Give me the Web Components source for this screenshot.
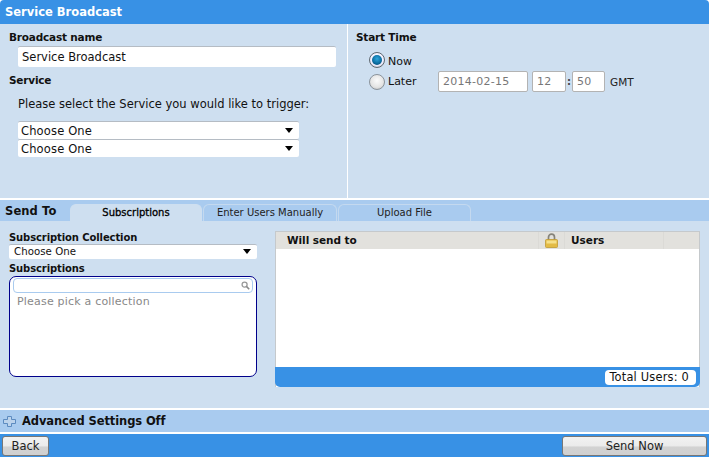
<!DOCTYPE html>
<html>
<head>
<meta charset="utf-8">
<title>Service Broadcast</title>
<style>
  html, body { margin: 0; padding: 0; background: #fff; }
  body { width: 709px; height: 457px; overflow: hidden; font: 11px "DejaVu Sans", Verdana, sans-serif; color: #111; }
</style>
</head>
<body>
<broadcast-app></broadcast-app>
<script>
// small helper so every element below stays short
function define(name, css, html) {
  const template = document.createElement('template');
  template.innerHTML = `<style>${css}</style>${html}`;
  customElements.define(name, class extends HTMLElement {
    constructor() {
      super();
      this.attachShadow({ mode: 'open' });
      this.shadowRoot.appendChild(template.content.cloneNode(true));
    }
  });
}

// white select with black arrow
define('sb-select', `
  :host { display: block; box-sizing: border-box; background: #fff; border-top: 1px solid #b5bcc4; border-radius: 2px; position: relative; padding-left: 3px; height: 18px; line-height: 19px; font-size: 11.5px; letter-spacing: .15px; width: 281px; }
  :host([small]) { width: 248px; height: 15px; line-height: 14px; font-size: 10.2px; letter-spacing: .05px; padding-left: 5px; }
  i { position: absolute; right: 6px; top: 6px; width: 0; height: 0; border: 4.5px solid transparent; border-top: 5px solid #000; border-bottom: 0; }
  :host([small]) i { right: 6px; top: 4px; }
`, `<slot></slot><i></i>`);

// glossy radio, grey ring and a blue dot when it is on
define('sb-radio', `
  :host { display: block; width: 16px; height: 16px; box-sizing: border-box; border-radius: 50%; border: 1px solid #8b939b; background: radial-gradient(circle at 50% 40%, #fbfbfb, #e4e4e4 60%, #b4b4b4); position: relative; }
  :host([on]) { background: radial-gradient(circle at 50% 40%, #fff, #eef 60%, #a8a8a8); border-color: #5f6870; }
  :host([on]) i { position: absolute; left: 2px; top: 2px; width: 10px; height: 10px; border-radius: 50%; background: radial-gradient(circle at 50% 38%, #2fa6dc, #0c6fa3 55%, #053f66); }
`, `<i></i>`);

// grey time input
define('sb-time', `
  :host { display: block; box-sizing: border-box; height: 21px; line-height: 19px; background: #fff; border: 1px solid #b3b3b3; border-radius: 2px; padding-left: 4px; color: #777; font-size: 11px; letter-spacing: .25px; }
`, `<slot></slot>`);

define('sb-button', `
  :host { display: block; box-sizing: border-box; height: 20px; line-height: 19px; text-align: center; font-size: 11.5px; border: 1px solid #777; border-radius: 3px; background: linear-gradient(#f2f2f2 0, #ebebeb 50%, #d2d2d2 55%, #d0d0d0 100%); color: #222; }
`, `<slot></slot>`);

define('sb-tab', `
  :host { display: block; box-sizing: border-box; height: 17px; line-height: 16px; text-align: center; font-size: 10px; border: 1px solid #c4d9ef; border-bottom: 0; border-radius: 6px 6px 0 0; margin-right: 1px; color: #222; }
  :host([active]) { background: #cedff0; border-color: #cedff0; color: #000; -webkit-text-stroke: .3px #000; }
`, `<slot></slot>`);

define('sb-grid', `
  :host { display: flex; flex-direction: column; box-sizing: border-box; width: 425px; height: 156px; border: 1px solid #c5c9cc; border-bottom: 0; background: #fff; font-size: 10.5px; }
  .head { height: 17px; background: #e2e1dd; display: grid; grid-template-columns: 263px 26px 99px 1fr; line-height: 17px; font-weight: 700; color: #111; flex: none; }
  .head > div { border-right: 1px solid #dbdad6; }
  .head > div:last-child { border-right: 0; }
  .will { padding-left: 11px; letter-spacing: -.05px; }
  .lock { display: flex; justify-content: center; padding-top: 1px; }
  .users { padding-left: 6px; }
  .rows { flex: 1; }
  .foot { flex: none; height: 20px; margin: 0 -1px; background: #3891e5; border-radius: 0 0 5px 5px; display: flex; justify-content: flex-end; align-items: center; padding: 0 4px 0 0; }
  .total { background: #fff; border-radius: 4px; height: 15px; line-height: 15px; padding: 0 7px 0 4px; font-size: 11.4px; letter-spacing: .2px; }
`, `
  <div class="head">
    <div class="will">Will send to</div>
    <div class="lock"><svg width="13" height="15" viewBox="0 0 13 15"><path d="M3.500 7V4.200a3 3 0 0 1 6 0V7" fill="none" stroke="#85837a" stroke-width="1.700"/><rect x=".5" y="6.500" width="12" height="8" rx="1" fill="#e3bb45" stroke="#c09a34" stroke-width=".8"/><rect x="1.500" y="7.500" width="10" height="3" fill="#f5e08a"/></svg></div>
    <div class="users">Users</div>
    <div></div>
  </div>
  <div class="rows"></div>
  <div class="foot"><div class="total">Total Users: 0</div></div>
`);

define('sb-picker', `
  :host { display: block; box-sizing: border-box; width: 248px; height: 101px; background: #fff; border: 1px solid #00008b; border-radius: 7px; padding: 1px 3px; }
  .search { box-sizing: border-box; height: 15px; border: 1px solid #a9cbef; border-radius: 4px; display: flex; justify-content: flex-end; align-items: center; padding-right: 2px; }
  .hint { color: #888; font-size: 11px; padding: 2px 0 0 4px; letter-spacing: .2px; line-height: 14px; }
`, `
  <div class="search"><svg width="9" height="9" viewBox="0 0 9 9"><circle cx="3.600" cy="3.600" r="2.500" fill="none" stroke="#999" stroke-width="1.300"/><path d="M5.400 5.400L8.200 8.200" stroke="#888" stroke-width="1.600"/></svg></div>
  <div class="hint"><slot></slot></div>
`);

define('broadcast-app', `
  :host { display: flex; flex-direction: column; width: 709px; height: 457px; background: #fff; }
  .title { flex: none; height: 24px; line-height: 25px; background: #3891e5; color: #fff; font-weight: 700; font-size: 11.5px; padding-left: 5px; border-radius: 4px 4px 0 0; }
  .top { flex: none; height: 174px; display: grid; grid-template-columns: 347px 1fr; gap: 1px; }
  .left, .right { background: #cedff0; }
  .left { padding: 7px 0 0 9px; }
  .label { font-size: 10.5px; font-weight: 700; line-height: 13px; color: #111; letter-spacing: -.2px; }
  .name { box-sizing: border-box; margin: 2px 0 0 9px; width: 318px; height: 21px; line-height: 20px; background: #fff; border-top: 1px solid #b5bcc4; border-radius: 2px; padding-left: 4px; font-size: 11.5px; }
  .service { margin-top: 7px; }
  .please { margin: 10px 0 0 9px; font-size: 11.5px; line-height: 14px; }
  .selects { margin: 10px 0 0 9px; }
  .right { padding: 7px 0 0 8px; }
  .radios { margin: 7px 0 0 13px; display: grid; grid-template-columns: 16px 47px auto; column-gap: 3px; row-gap: 2px; font-size: 11px; align-items: center; }
  .now { height: 18px; line-height: 21px; }
  .times { display: flex; align-items: center; height: 21px; }
  .colon { width: 6px; text-align: center; font-size: 10px; font-weight: 700; color: #444; }
  .gmt { margin-left: 5px; font-size: 10.5px; color: #222; }
  .sep { flex: none; height: 2px; }
  .band { flex: none; height: 21px; background: #a9cbef; display: flex; align-items: flex-end; }
  .sendto { font-size: 11.5px; font-weight: 700; width: 71px; margin-right: -1px; padding-left: 5px; box-sizing: border-box; align-self: center; color: #111; letter-spacing: .1px; }
  .main { flex: none; height: 187px; background: #cedff0; display: grid; grid-template-columns: 275px 1fr; padding: 10px 9px 0 0; box-sizing: border-box; }
  .sub { padding: 0 0 0 9px; }
  .sub .label { font-size: 10px; letter-spacing: -.1px; line-height: 13px; }
  .sub .subs { margin: 3px 0 1px; }
  .adv { flex: none; height: 22px; margin-top: 2px; background: #a9cbef; display: flex; align-items: center; gap: 6px; padding-left: 3px; font-size: 11.5px; font-weight: 700; letter-spacing: -.1px; color: #111; }
  .foot { flex: none; height: 23px; margin-top: 2px; background: #3891e5; display: flex; justify-content: space-between; padding: 2px 2px 0 2px; box-sizing: border-box; }
  .back { width: 47px; }
  .send { width: 145px; }
`, `
  <div class="title">Service Broadcast</div>
  <div class="top">
    <div class="left">
      <div class="label">Broadcast name</div>
      <div class="name">Service Broadcast</div>
      <div class="label service">Service</div>
      <div class="please">Please select the Service you would like to trigger:</div>
      <div class="selects">
        <sb-select>Choose One</sb-select>
        <sb-select>Choose One</sb-select>
      </div>
    </div>
    <div class="right">
      <div class="label">Start Time</div>
      <div class="radios">
        <sb-radio on></sb-radio><div class="now">Now</div><div></div>
        <sb-radio></sb-radio><div>Later</div>
        <div class="times">
          <sb-time style="width:90px;margin-right:4px">2014-02-15</sb-time>
          <sb-time style="width:34px">12</sb-time>
          <span class="colon">:</span>
          <sb-time style="width:33px">50</sb-time>
          <span class="gmt">GMT</span>
        </div>
      </div>
    </div>
  </div>
  <div class="sep"></div>
  <div class="band">
    <div class="sendto">Send To</div>
    <sb-tab active style="width:132px">Subscriptions</sb-tab>
    <sb-tab style="width:134px">Enter Users Manually</sb-tab>
    <sb-tab style="width:133px">Upload File</sb-tab>
  </div>
  <div class="main">
    <div class="sub">
      <div class="label">Subscription Collection</div>
      <sb-select small>Choose One</sb-select>
      <div class="label subs">Subscriptions</div>
      <sb-picker>Please pick a collection</sb-picker>
    </div>
    <sb-grid></sb-grid>
  </div>
  <div class="adv">
    <svg width="13" height="11" viewBox="0 0 13 11"><path d="M4.500 .5h4v3h4v4h-4v3h-4v-3h-4v-4h4z" fill="#bcd3ec" stroke="#5c8bc0" stroke-width="1"/></svg>
    <span>Advanced Settings Off</span>
  </div>
  <div class="foot">
    <sb-button class="back">Back</sb-button>
    <sb-button class="send">Send Now</sb-button>
  </div>
`);
</script>
</body>
</html>
